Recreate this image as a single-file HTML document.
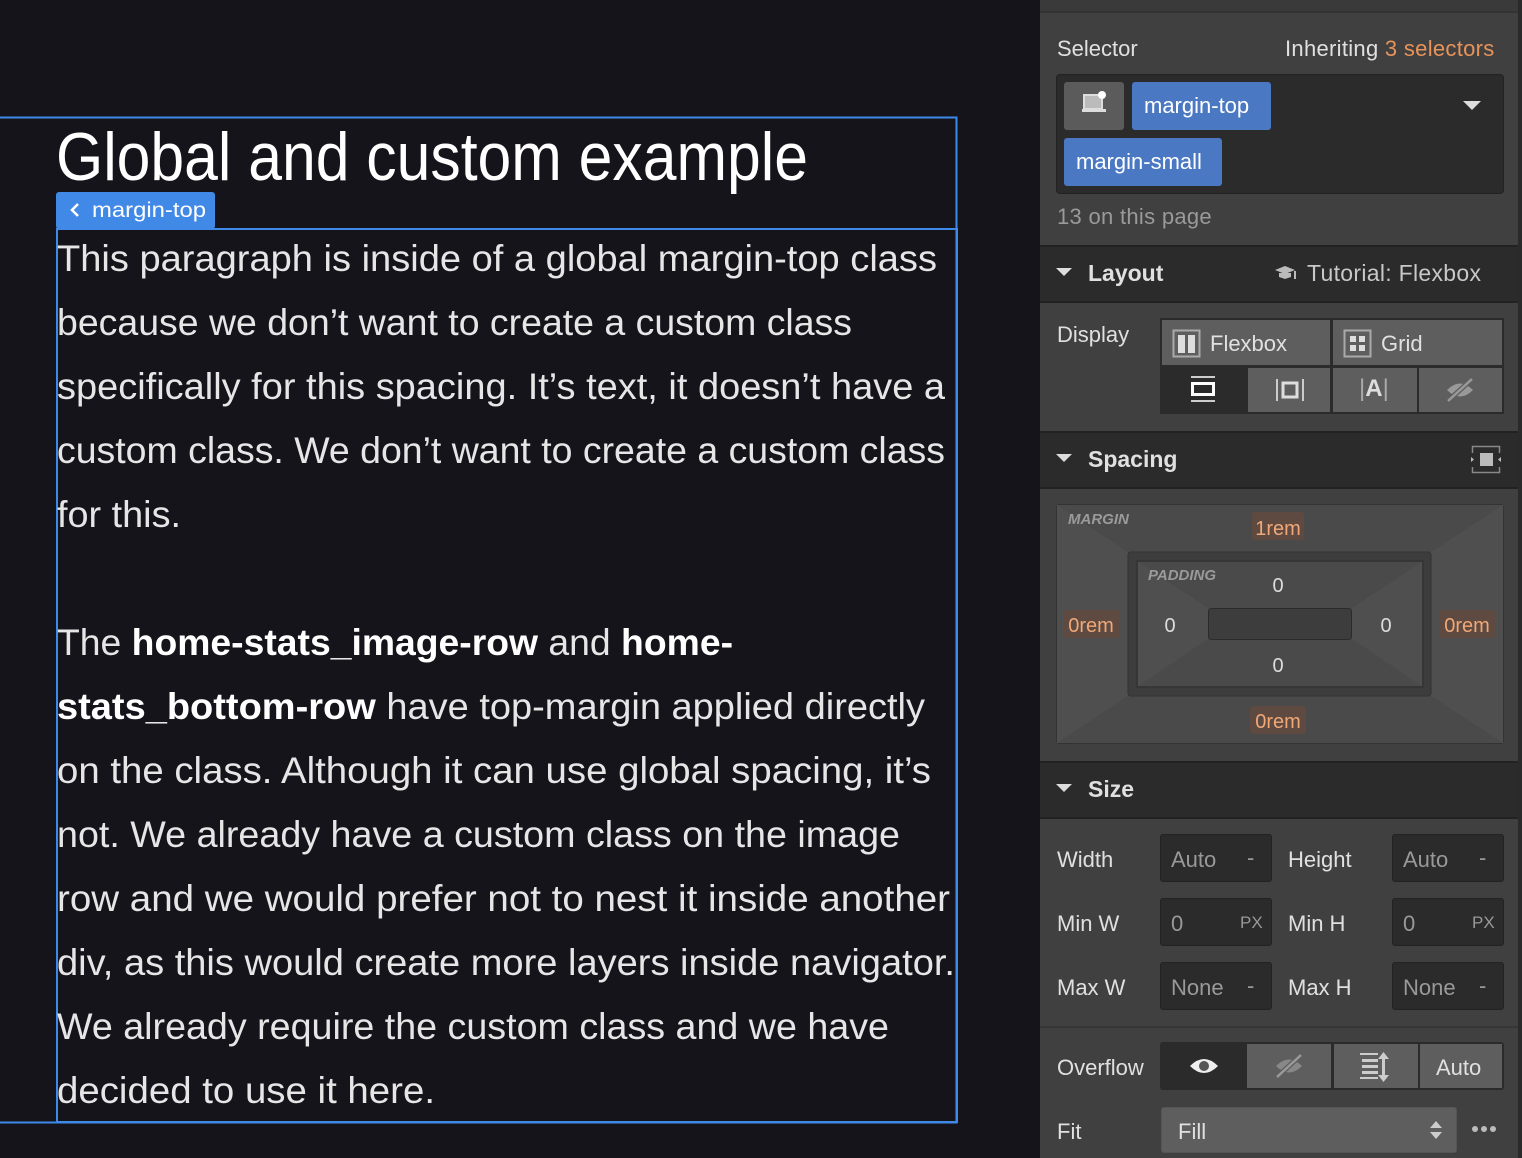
<!DOCTYPE html>
<html><head><meta charset="utf-8"><style>
*{margin:0;padding:0;box-sizing:border-box}
body{width:1522px;height:1158px;background:#16141b;position:relative;overflow:hidden;font-family:"Liberation Sans",sans-serif}
.a{position:absolute}
.t{position:absolute;color:#e0e0e0;font-size:22px;white-space:nowrap}
.hdr{position:absolute;left:1040px;width:478px;background:#2b2b2b;border-top:2px solid #222;border-bottom:2px solid #222}
.inp{position:absolute;background:#2b2b2b;border:1px solid #222;border-radius:3px;height:48px;width:112px}
.btn{position:absolute;background:#5e5e5e}
</style></head><body>
<svg class="a" style="left:0;top:0" width="1040" height="1158">
<path d="M0 117.5 H956.5 V1122.5 H0" fill="none" stroke="#3f8ae8" stroke-width="2"/>
<rect x="57" y="229" width="900" height="893" fill="none" stroke="#3f8ae8" stroke-width="2"/>
<text x="56" y="180" font-family="Liberation Sans" font-size="68" fill="#fff" textLength="752" lengthAdjust="spacingAndGlyphs">Global and custom example</text>
<rect x="56" y="192" width="159" height="37" rx="3" fill="#4189e6"/>
<path d="M78 204 L72 210 L78 216" stroke="#fff" stroke-width="2.5" fill="none"/>
<text x="92" y="217" font-family="Liberation Sans" font-size="21" fill="#fff" textLength="114" lengthAdjust="spacingAndGlyphs">margin-top</text>
<g font-family="Liberation Sans" font-size="37" fill="#e6e6e6">
<text x="57" y="271" textLength="880" lengthAdjust="spacingAndGlyphs">This paragraph is inside of a global margin-top class</text>
<text x="57" y="335" textLength="795" lengthAdjust="spacingAndGlyphs">because we don’t want to create a custom class</text>
<text x="57" y="399" textLength="888" lengthAdjust="spacingAndGlyphs">specifically for this spacing. It’s text, it doesn’t have a</text>
<text x="57" y="463" textLength="888" lengthAdjust="spacingAndGlyphs">custom class. We don’t want to create a custom class</text>
<text x="57" y="527" textLength="124" lengthAdjust="spacingAndGlyphs">for this.</text>
<text x="57" y="655" textLength="676" lengthAdjust="spacingAndGlyphs">The <tspan font-weight="bold" fill="#fff">home-stats_image-row</tspan> and <tspan font-weight="bold" fill="#fff">home-</tspan></text>
<text x="57" y="719" textLength="868" lengthAdjust="spacingAndGlyphs"><tspan font-weight="bold" fill="#fff">stats_bottom-row</tspan> have top-margin applied directly</text>
<text x="57" y="783" textLength="874" lengthAdjust="spacingAndGlyphs">on the class. Although it can use global spacing, it’s</text>
<text x="57" y="847" textLength="843" lengthAdjust="spacingAndGlyphs">not. We already have a custom class on the image</text>
<text x="57" y="911" textLength="893" lengthAdjust="spacingAndGlyphs">row and we would prefer not to nest it inside another</text>
<text x="57" y="975" textLength="898" lengthAdjust="spacingAndGlyphs">div, as this would create more layers inside navigator.</text>
<text x="57" y="1039" textLength="832" lengthAdjust="spacingAndGlyphs">We already require the custom class and we have</text>
<text x="57" y="1103" textLength="378" lengthAdjust="spacingAndGlyphs">decided to use it here.</text>
</g>
</svg>

<div class="a" style="left:1040px;top:0;width:482px;height:1158px;background:#404040"></div>
<div class="a" style="left:1040px;top:0;width:478px;height:13px;background:#3a3a3a;border-bottom:2px solid #333"></div>
<div class="a" style="left:1518px;top:0;width:4px;height:1158px;background:#2a2a2a"></div>

<div class="t" style="left:1057px;top:36px">Selector</div>
<div class="t" style="left:1285px;top:36px;letter-spacing:0.3px">Inheriting <span style="color:#e8935a">3 selectors</span></div>
<div class="a" style="left:1056px;top:74px;width:448px;height:120px;background:#2b2b2b;border:1px solid #222;border-radius:4px"></div>
<div class="a" style="left:1064px;top:82px;width:60px;height:48px;background:#5b5b5b;border-radius:3px"></div>
<svg class="a" style="left:1081px;top:90px" width="28" height="28"><rect x="3" y="5" width="18" height="14" fill="#bbb" stroke="#ddd" stroke-width="2"/><rect x="1" y="19" width="24" height="3" fill="#ddd"/><circle cx="21" cy="5" r="4" fill="#fff"/></svg>
<div class="a" style="left:1132px;top:82px;width:139px;height:48px;background:#4a78c2;border-radius:3px;color:#fff;font-size:22px;line-height:48px;padding-left:12px">margin-top</div>
<div class="a" style="left:1064px;top:138px;width:158px;height:48px;background:#4a78c2;border-radius:3px;color:#fff;font-size:22px;line-height:48px;padding-left:12px">margin-small</div>
<svg class="a" style="left:1462px;top:100px" width="20" height="12"><path d="M1 1 L19 1 L10 10Z" fill="#ddd"/></svg>
<div class="t" style="left:1057px;top:204px;color:#9a9a9a;letter-spacing:0.3px">13 on this page</div>

<div class="hdr" style="top:245px;height:58px"></div>
<svg class="a" style="left:1055px;top:267px" width="18" height="12"><path d="M1 1 L17 1 L9 9Z" fill="#ddd"/></svg>
<div class="t" style="left:1088px;top:260px;font-weight:bold;font-size:23px">Layout</div>
<svg class="a" style="left:1274px;top:263px" width="24" height="20"><path d="M1 7 L11 3 L21 7 L11 11Z" fill="#bbb"/><path d="M5 10 L5 14 L11 16 L17 14 L17 10" fill="#bbb"/><path d="M21 8 L21 16" stroke="#bbb" stroke-width="2"/></svg>
<div class="t" style="left:1307px;top:260px;color:#c8c8c8;font-size:23px;letter-spacing:0.3px">Tutorial: Flexbox</div>

<div class="t" style="left:1057px;top:322px">Display</div>
<div class="a" style="left:1160px;top:318px;width:344px;height:96px;background:#2b2b2b;border:1px solid #2b2b2b"></div>
<div class="btn" style="left:1162px;top:320px;width:168px;height:45px"></div>
<div class="btn" style="left:1333px;top:320px;width:169px;height:45px"></div>
<svg class="a" style="left:1172px;top:329px" width="30" height="30"><rect x="1.5" y="1.5" width="26" height="26" fill="none" stroke="#aaa" stroke-width="2"/><rect x="6" y="6" width="7" height="18" fill="#ddd"/><rect x="16" y="6" width="7" height="18" fill="#ddd"/></svg>
<div class="t" style="left:1210px;top:331px">Flexbox</div>
<svg class="a" style="left:1343px;top:329px" width="30" height="30"><rect x="1.5" y="1.5" width="26" height="26" fill="none" stroke="#aaa" stroke-width="2"/><rect x="7" y="7" width="6" height="6" fill="#ddd"/><rect x="16" y="7" width="6" height="6" fill="#ddd"/><rect x="7" y="16" width="6" height="6" fill="#ddd"/><rect x="16" y="16" width="6" height="6" fill="#ddd"/></svg>
<div class="t" style="left:1381px;top:331px">Grid</div>
<div class="btn" style="left:1248px;top:368px;width:82px;height:44px"></div>
<div class="btn" style="left:1333px;top:368px;width:84px;height:44px"></div>
<div class="btn" style="left:1419px;top:368px;width:83px;height:44px"></div>
<svg class="a" style="left:1190px;top:376px" width="28" height="30"><rect x="1" y="0" width="24" height="2" fill="#ccc"/><rect x="2.5" y="7.5" width="21" height="11" fill="none" stroke="#fff" stroke-width="3"/><rect x="1" y="24" width="24" height="2" fill="#ccc"/></svg>
<svg class="a" style="left:1275px;top:376px" width="30" height="28"><rect x="1" y="3" width="2" height="22" fill="#ccc"/><rect x="27" y="3" width="2" height="22" fill="#ccc"/><rect x="8" y="7" width="14" height="14" fill="none" stroke="#ddd" stroke-width="3"/></svg>
<div class="a" style="left:1359px;top:375px;color:#ddd;font-size:24px;font-weight:bold;white-space:nowrap"><span style="font-weight:normal;color:#aaa">|</span>A<span style="font-weight:normal;color:#aaa">|</span></div>
<svg class="a" style="left:1444px;top:376px" width="32" height="28"><path d="M3 14 Q16 1 29 14 Q16 27 3 14Z" fill="#999"/><path d="M4 25 L28 3" stroke="#5e5e5e" stroke-width="5"/><path d="M4 25 L28 3" stroke="#999" stroke-width="2.5"/></svg>

<div class="hdr" style="top:431px;height:58px"></div>
<svg class="a" style="left:1055px;top:453px" width="18" height="12"><path d="M1 1 L17 1 L9 9Z" fill="#ddd"/></svg>
<div class="t" style="left:1088px;top:446px;font-weight:bold;font-size:23px">Spacing</div>
<svg class="a" style="left:1470px;top:445px" width="32" height="30"><rect x="2.5" y="1.5" width="27" height="26" fill="none" stroke="#888" stroke-width="1.5"/><rect x="0" y="8" width="4" height="14" fill="#2b2b2b"/><rect x="28" y="8" width="4" height="14" fill="#2b2b2b"/><rect x="10" y="8" width="13" height="13" fill="#bbb"/><path d="M1 12 L4 14.5 L1 17Z M31 12 L28 14.5 L31 17Z" fill="#bbb"/></svg>

<svg class="a" style="left:1056px;top:504px" width="448" height="240">
<rect x="0.5" y="0.5" width="447" height="239" rx="3" fill="#4a4a4a" stroke="#333"/>
<path d="M1 1 L447 1 L375 48 L72 48Z" fill="#4a4a4a"/>
<path d="M1 1 L72 48 L72 192 L1 239Z" fill="#4f4f4f"/>
<path d="M447 1 L375 48 L375 192 L447 239Z" fill="#4f4f4f"/>
<path d="M1 239 L72 192 L375 192 L447 239Z" fill="#4a4a4a"/>
<rect x="72" y="48" width="303" height="144" rx="3" fill="#3d3d3d" stroke="#333"/>
<rect x="81" y="57" width="286" height="126" fill="#4a4a4a" stroke="#333" stroke-width="1.5"/>
<path d="M82 58 L152 104 L152 135 L82 182Z" fill="#4f4f4f"/>
<path d="M366 58 L296 104 L296 135 L366 182Z" fill="#4f4f4f"/>
<rect x="152.5" y="104.5" width="143" height="31" rx="3" fill="#3d3d3d" stroke="#2b2b2b"/>
<g font-family="Liberation Sans" font-style="italic" font-weight="bold" font-size="15" fill="#9a9a9a"><text x="12" y="20">MARGIN</text><text x="92" y="76">PADDING</text></g>
<g fill="#5e4a40"><rect x="196" y="8" width="52" height="28" rx="3"/><rect x="7" y="106" width="56" height="28" rx="3"/><rect x="383" y="106" width="56" height="28" rx="3"/><rect x="194" y="202" width="56" height="28" rx="3"/></g>
<g font-family="Liberation Sans" font-size="20" text-anchor="middle" fill="#f0a878"><text x="222" y="31">1rem</text><text x="35" y="128">0rem</text><text x="411" y="128">0rem</text><text x="222" y="224">0rem</text></g>
<g font-family="Liberation Sans" font-size="20" text-anchor="middle" fill="#ddd"><text x="222" y="88">0</text><text x="114" y="128">0</text><text x="330" y="128">0</text><text x="222" y="168">0</text></g>
</svg>

<div class="hdr" style="top:761px;height:58px"></div>
<svg class="a" style="left:1055px;top:783px" width="18" height="12"><path d="M1 1 L17 1 L9 9Z" fill="#ddd"/></svg>
<div class="t" style="left:1088px;top:776px;font-weight:bold;font-size:23px">Size</div>

<div class="t" style="left:1057px;top:847px">Width</div>
<div class="t" style="left:1057px;top:911px">Min W</div>
<div class="t" style="left:1057px;top:975px">Max W</div>
<div class="t" style="left:1288px;top:847px">Height</div>
<div class="t" style="left:1288px;top:911px">Min H</div>
<div class="t" style="left:1288px;top:975px">Max H</div>
<div class="inp" style="left:1160px;top:834px"></div><div class="t" style="left:1171px;top:847px;color:#999">Auto</div><div class="t" style="left:1247px;top:845px;color:#999">-</div>
<div class="inp" style="left:1160px;top:898px"></div><div class="t" style="left:1171px;top:911px;color:#999">0</div><div class="t" style="left:1240px;top:913px;color:#999;font-size:17px">PX</div>
<div class="inp" style="left:1160px;top:962px"></div><div class="t" style="left:1171px;top:975px;color:#999">None</div><div class="t" style="left:1247px;top:973px;color:#999">-</div>
<div class="inp" style="left:1392px;top:834px"></div><div class="t" style="left:1403px;top:847px;color:#999">Auto</div><div class="t" style="left:1479px;top:845px;color:#999">-</div>
<div class="inp" style="left:1392px;top:898px"></div><div class="t" style="left:1403px;top:911px;color:#999">0</div><div class="t" style="left:1472px;top:913px;color:#999;font-size:17px">PX</div>
<div class="inp" style="left:1392px;top:962px"></div><div class="t" style="left:1403px;top:975px;color:#999">None</div><div class="t" style="left:1479px;top:973px;color:#999">-</div>

<div class="a" style="left:1040px;top:1026px;width:478px;height:2px;background:#363636"></div>
<div class="t" style="left:1057px;top:1055px">Overflow</div>
<div class="a" style="left:1160px;top:1042px;width:344px;height:48px;background:#2b2b2b;border:1px solid #2b2b2b;border-radius:3px"></div>
<div class="btn" style="left:1247px;top:1044px;width:84px;height:44px"></div>
<div class="btn" style="left:1334px;top:1044px;width:84px;height:44px"></div>
<div class="btn" style="left:1420px;top:1044px;width:82px;height:44px"></div>
<svg class="a" style="left:1188px;top:1054px" width="32" height="24"><path d="M2 12 Q16 -2 30 12 Q16 26 2 12Z" fill="#eee"/><circle cx="16" cy="12" r="5" fill="#555"/></svg>
<svg class="a" style="left:1273px;top:1052px" width="32" height="28"><path d="M3 14 Q16 1 29 14 Q16 27 3 14Z" fill="#888"/><path d="M4 25 L28 3" stroke="#5e5e5e" stroke-width="5"/><path d="M4 25 L28 3" stroke="#999" stroke-width="2.5"/></svg>
<svg class="a" style="left:1358px;top:1052px" width="36" height="30"><g fill="#ccc"><rect x="2" y="1" width="18" height="2"/><rect x="4" y="7" width="16" height="3"/><rect x="4" y="13" width="16" height="3"/><rect x="4" y="19" width="16" height="3"/><rect x="2" y="25" width="18" height="2"/><rect x="24" y="5" width="3" height="20"/><path d="M20 7 L25.5 0 L31 7Z M20 23 L25.5 30 L31 23Z"/></g></svg>
<div class="t" style="left:1436px;top:1055px">Auto</div>

<div class="t" style="left:1057px;top:1119px">Fit</div>
<div class="a" style="left:1161px;top:1107px;width:296px;height:46px;background:#5e5e5e;border:1px solid #555;border-radius:3px"></div>
<div class="t" style="left:1178px;top:1119px">Fill</div>
<svg class="a" style="left:1428px;top:1120px" width="16" height="20"><path d="M2 8 L8 1 L14 8Z M2 12 L8 19 L14 12Z" fill="#ccc"/></svg>
<svg class="a" style="left:1470px;top:1124px" width="28" height="10"><circle cx="5" cy="5" r="3" fill="#bbb"/><circle cx="14" cy="5" r="3" fill="#bbb"/><circle cx="23" cy="5" r="3" fill="#bbb"/></svg>
</body></html>
